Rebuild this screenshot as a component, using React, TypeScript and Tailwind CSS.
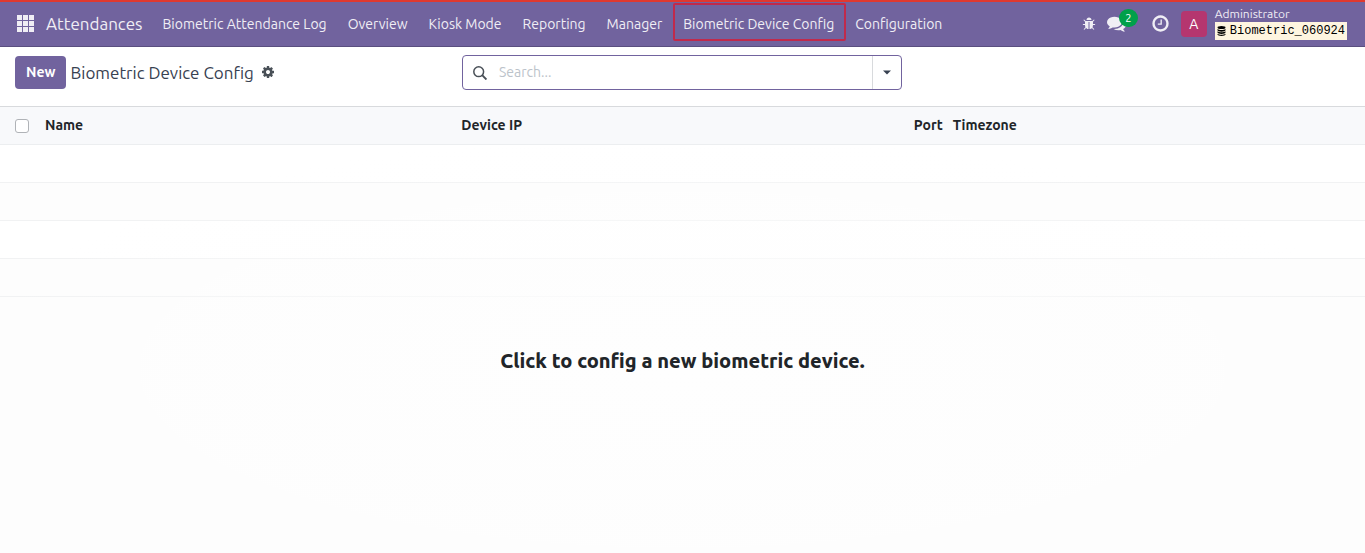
import React from "react";

const LINKS = [
  "Biometric Attendance Log",
  "Overview",
  "Kiosk Mode",
  "Reporting",
  "Manager",
  "Biometric Device Config",
  "Configuration",
];
const ACTIVE = "Biometric Device Config";

function Glyph({ d, className }: { d: string; className: string }) {
  return (
    <svg viewBox="0 0 1792 1792" fill="currentColor" aria-hidden="true" className={className}>
      <path d={d} />
    </svg>
  );
}

const BUG =
  "M1696 960q0 26-19 45t-45 19h-224q0 171-67 290l208 209q19 19 19 45t-19 45q-18 19-45 19t-45-19l-198-197q-5 5-15 13t-42 28.5-65 36.5-82 29-97 13v-896h-128v896q-51 0-101.5-13.5t-87-33-66-39-43.5-32.5l-15-14-183 207q-20 21-48 21-24 0-43-16-19-18-20.5-44.5t15.5-46.5l202-227q-58-114-58-274h-224q-26 0-45-19t-19-45 19-45 45-19h224v-294l-173-173q-19-19-19-45t19-45 45-19 45 19l173 173h844l173-173q19-19 45-19t45 19 19 45-19 45l-173 173v294h224q26 0 45 19t19 45zm-480-576h-640q0-133 93.5-226.5t226.5-93.5 226.5 93.5 93.5 226.5z";
const COMMENTS =
  "M1408 768q0 139-94 257t-256.5 186.5-353.5 68.5q-86 0-176-16-124 88-278 128-36 9-86 16h-3q-11 0-20.5-8t-11.5-21q-1-3-1-6.5t.5-6.5 2-6l2.5-5 3.5-5.5 4-5 4.5-5 4-4.5q5-6 23-25t26-29.5 22.5-29 25-38.5 20.5-44q-124-72-195-177t-71-224q0-139 94-257t256.5-186.5 353.5-68.5 353.5 68.5 256.5 186.5 94 257zm384 256q0 120-71 224.5t-195 176.5q10 24 20.5 44t25 38.5 22.5 29 26 29.5 23 25q1 1 4 4.5t4.5 5 4 5 3.5 5.5l2.5 5 2 6 .5 6.5-1 6.5q-3 14-13 22t-22 7q-50-7-86-16-154-40-278-128-90 16-176 16-271 0-472-132 58 4 88 4 161 0 309-45t264-129q125-92 192-212t67-254q0-77-23-152 129 71 204 178t75 230z";
const CLOCK =
  "M1024 544v448q0 14-9 23t-23 9h-320q-14 0-23-9t-9-23v-64q0-14 9-23t23-9h224v-352q0-14 9-23t23-9h64q14 0 23 9t9 23zm416 352q0-148-73-273t-198-198-273-73-273 73-198 198-73 273 73 273 198 198 273 73 273-73 198-198 73-273zm224 0q0 209-103 385.5t-279.5 279.5-385.5 103-385.5-103-279.5-279.5-103-385.5 103-385.5 279.5-279.5 385.5-103 385.5 103 279.5 279.5 103 385.5z";
const COG =
  "M1152 896q0-106-75-181t-181-75-181 75-75 181 75 181 181 75 181-75 75-181zm512-109v222q0 12-8 23t-20 13l-185 28q-19 54-39 91 35 50 107 138 10 12 10 25t-9 23q-27 37-99 108t-94 71q-12 0-26-9l-138-108q-44 23-91 38-16 136-29 186-7 28-36 28h-222q-14 0-24.5-8.5t-11.5-21.5l-28-184q-49-16-90-37l-141 107q-10 9-25 9-14 0-25-11-126-114-165-168-7-10-7-23 0-12 8-23 15-21 51-66.5t54-70.5q-27-50-41-99l-183-27q-13-2-21-12.5t-8-23.5v-222q0-12 8-23t19-13l186-28q14-46 39-92-40-57-107-138-10-12-10-24 0-10 9-23 26-36 98.5-107.5t94.5-71.5q13 0 26 10l138 107q44-23 91-38 16-136 29-186 7-28 36-28h222q14 0 24.5 8.5t11.5 21.5l28 184q49 16 90 37l142-107q9-9 24-9 13 0 25 10 129 119 165 170 7 8 7 22 0 12-8 23-15 21-51 66.5t-54 70.5q26 50 41 98l183 28q13 2 21 12.5t8 23.5z";

function AppsIcon() {
  return (
    <svg viewBox="0 0 17 17" fill="currentColor" aria-hidden="true" className="size-[17px]">
      {[0, 6, 12].map((y) =>
        [0, 6, 12].map((x) => <rect key={`${x}-${y}`} x={x} y={y} width="5" height="5" />)
      )}
    </svg>
  );
}

function DatabaseIcon() {
  return (
    <svg viewBox="0 0 9 10" fill="currentColor" aria-hidden="true" className="h-[10px] w-[9px]">
      <ellipse cx="4.5" cy="1.600" rx="4" ry="1.500" />
      <path d="M.5 2.900c1.800 1.400 6.200 1.400 8 0v1.300c0 1.900-8 1.900-8 0z" />
      <path d="M.5 5.300c1.800 1.400 6.200 1.400 8 0v1.300c0 1.900-8 1.900-8 0z" />
      <path d="M.5 7.700c1.800 1.400 6.200 1.400 8 0v.8c0 1.900-8 1.900-8 0z" />
    </svg>
  );
}

function Navbar() {
  return (
    <header className="flex h-[47px] items-stretch justify-between border-t-2 border-b border-t-[#e0392f] border-b-[#5a4f7f] bg-[#71639e] text-[#f0eef5]">
      <div className="flex items-start">
        <a href="#apps" aria-label="Home menu" className="flex h-[42px] items-center pr-3 pl-[17px]">
          <AppsIcon />
        </a>
        <a href="#attendances" className="flex h-11 items-center pr-[10px] text-[17px] whitespace-nowrap">
          Attendances
        </a>
        <nav aria-label="Main" className="flex items-start gap-px">
          {LINKS.map((label) => (
            <a
              key={label}
              href="#menu"
              className="relative flex h-11 items-center px-[10px] text-sm whitespace-nowrap"
            >
              {label}
              {label === ACTIVE && (
                <span className="absolute -right-[2px] left-0 top-px h-[38px] rounded-[2px] border-2 border-[#c02a4c]" />
              )}
            </a>
          ))}
        </nav>
      </div>
      <div className="flex h-[43px] items-center pr-[18px]">
        <button type="button" aria-label="Debug tools" className="mr-[11px]">
          <Glyph d={BUG} className="size-[14px]" />
        </button>
        <button type="button" aria-label="Messages" className="relative mr-[25px]">
          <Glyph d={COMMENTS} className="size-[19px]" />
          <span className="absolute -top-[5px] left-3 flex h-[18px] w-[19px] items-center justify-center rounded-full bg-[#00a04a] text-[11px] text-white">
            2
          </span>
        </button>
        <button type="button" aria-label="Activities" className="mr-[11px]">
          <Glyph d={CLOCK} className="size-[19px]" />
        </button>
        <button type="button" className="flex items-center gap-2 text-left">
          <span className="mt-px flex size-[26px] items-center justify-center rounded bg-[#b5366f] text-sm text-white">
            A
          </span>
          <span className="flex flex-col pb-[2px]">
            <span className="text-xs leading-4">Administrator</span>
            <span className="flex h-[18px] items-center gap-1 bg-[#fef5e0] px-[2px] font-['Liberation_Mono',monospace] text-xs text-black">
              <DatabaseIcon />
              Biometric_060924
            </span>
          </span>
        </button>
      </div>
    </header>
  );
}

function ControlPanel() {
  return (
    <div className="grid h-[60px] grid-cols-[1fr_440px_1fr] items-start border-b border-[#d8dadd] bg-white pr-4 pl-[15px] pt-2">
      <div className="flex h-[34px] items-center">
        <button type="button" className="mr-1 h-[33px] rounded bg-[#71639e] px-[11px] text-sm font-semibold text-white">
          New
        </button>
        <h1 className="pt-[2px] text-[17px] whitespace-nowrap text-[#374151]">Biometric Device Config</h1>
        <button type="button" aria-label="Actions" className="ml-[7px] text-[#495057]">
          <Glyph d={COG} className="size-[14px]" />
        </button>
      </div>
      <div className="flex h-[35px] items-stretch rounded border border-[#71639e]">
        <label htmlFor="search" className="flex items-center pr-3 pl-[10px] text-[#495057]">
          <svg viewBox="0 0 14 14" fill="none" stroke="currentColor" strokeWidth="1.5" className="size-[14px]">
            <title>Search</title>
            <circle cx="5.700" cy="5.700" r="4.900" />
            <path d="M9.200 9.200l4.200 4.300" strokeWidth="1.900" />
          </svg>
        </label>
        <input
          id="search"
          type="text"
          placeholder="Search..."
          className="min-w-0 flex-1 bg-transparent pb-[2px] text-sm outline-none placeholder:text-[#bcc3ca]"
        />
        <button
          type="button"
          aria-label="Search options"
          className="flex w-[29px] items-center justify-center border-l border-[#d8dadd] text-[#374151]"
        >
          <svg viewBox="0 0 8 5" fill="currentColor" className="h-[5px] w-2">
            <path d="M0 .5h8L4 4.500z" />
          </svg>
        </button>
      </div>
    </div>
  );
}

function DeviceTable() {
  return (
    <table className="w-full table-fixed border-collapse text-sm">
      <colgroup>
        <col className="w-10" />
        <col className="w-[30.5%]" />
        <col className="w-[31%]" />
        <col className="w-[5%]" />
        <col />
      </colgroup>
      <thead>
        <tr className="h-[37px] border-b border-[#eceef0] bg-[#f8f9fb] text-left text-[#212529]">
          <th className="pl-[15px]">
            <input
              type="checkbox"
              aria-label="Select all"
              className="mt-px block size-[14px] appearance-none rounded-[3px] border border-[#b0b3b7] bg-white"
            />
          </th>
          <th className="px-[5px] font-semibold">Name</th>
          <th className="px-[5px] font-semibold">Device IP</th>
          <th className="px-[5px] text-right font-semibold">Port</th>
          <th className="px-[5px] font-semibold">Timezone</th>
        </tr>
      </thead>
      <tbody>
        {[0, 1, 2, 3].map((row) => (
          <tr key={row} className="h-[38px] border-b border-[#f1f2f3] odd:bg-white even:bg-[#fdfdfd]">
            <td colSpan={5} />
          </tr>
        ))}
      </tbody>
    </table>
  );
}

export default function App() {
  return (
    <div className="flex min-h-screen flex-col bg-[#fdfdfd] font-['Ubuntu','Noto_Sans',sans-serif]">
      <Navbar />
      <ControlPanel />
      <main className="relative flex flex-1 flex-col">
        <DeviceTable />
        <div className="pointer-events-none absolute inset-x-0 top-[38px] bottom-0 bg-[radial-gradient(ellipse_at_50%_55%,#fefefe_0%,#fefefe00_75%)]" />
        <p className="relative pt-[50px] text-center text-xl font-extrabold text-[#212529]">
          Click to config a new biometric device.
        </p>
      </main>
    </div>
  );
}
